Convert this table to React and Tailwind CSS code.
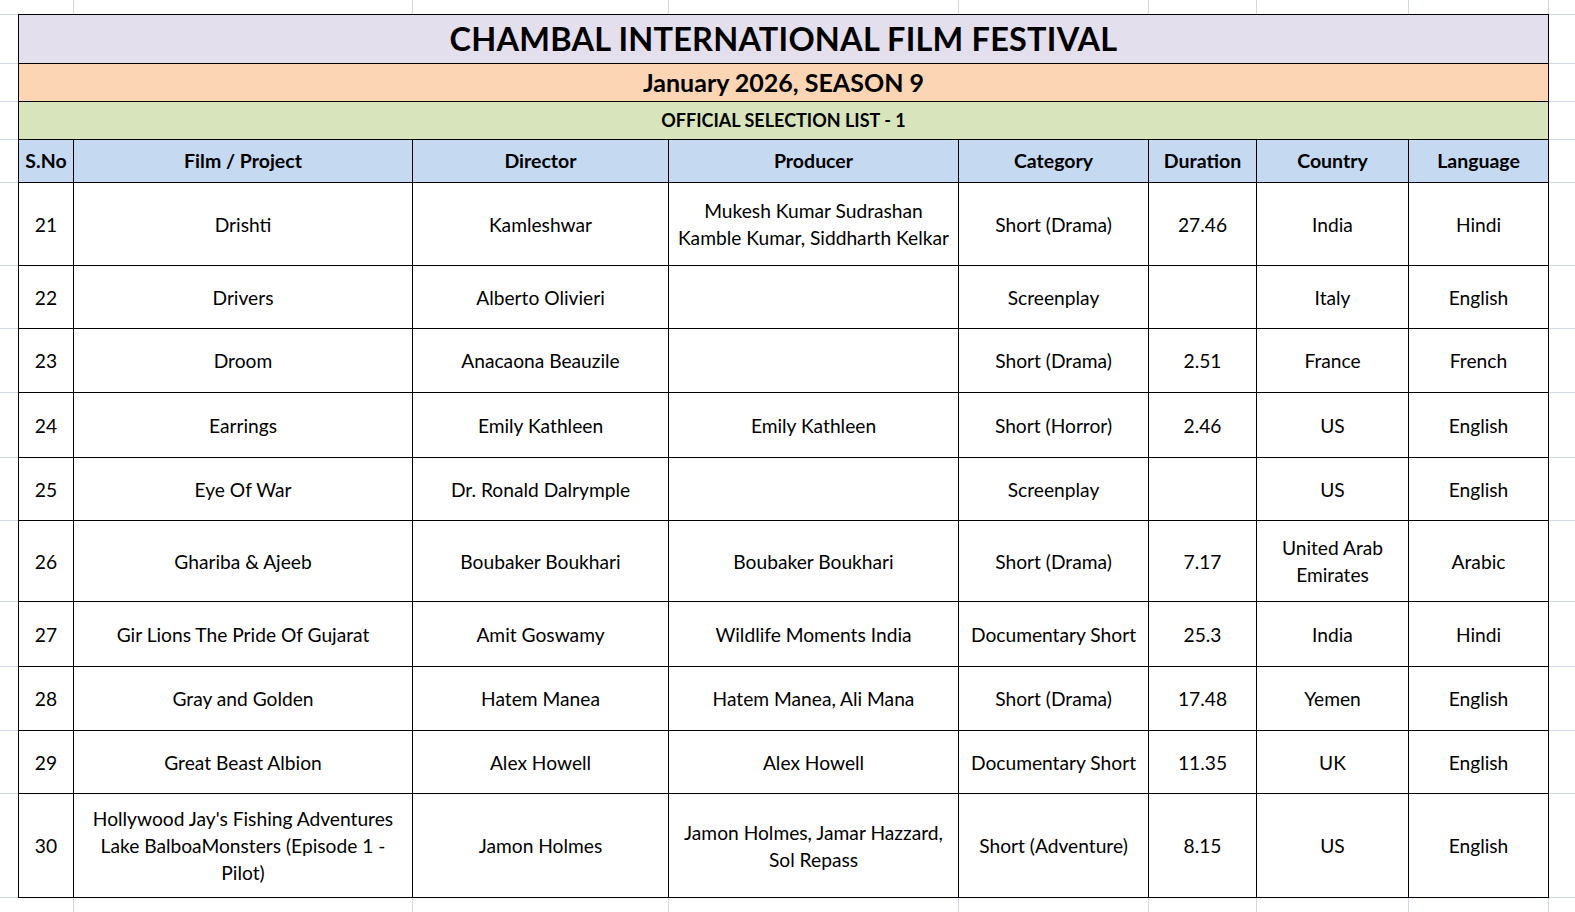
import React from "react";

const rows = [
  { h: "h-[83px]", c: ["21", ["Drishti"], ["Kamleshwar"], ["Mukesh Kumar Sudrashan", "Kamble Kumar, Siddharth Kelkar"], ["Short (Drama)"], ["27.46"], ["India"], ["Hindi"]] },
  { h: "h-[63px]", c: ["22", ["Drivers"], ["Alberto Olivieri"], [], ["Screenplay"], [], ["Italy"], ["English"]] },
  { h: "h-[64px]", c: ["23", ["Droom"], ["Anacaona Beauzile"], [], ["Short (Drama)"], ["2.51"], ["France"], ["French"]] },
  { h: "h-[65px]", c: ["24", ["Earrings"], ["Emily Kathleen"], ["Emily Kathleen"], ["Short (Horror)"], ["2.46"], ["US"], ["English"]] },
  { h: "h-[63px]", c: ["25", ["Eye Of War"], ["Dr. Ronald Dalrymple"], [], ["Screenplay"], [], ["US"], ["English"]] },
  { h: "h-[81px]", c: ["26", ["Ghariba & Ajeeb"], ["Boubaker Boukhari"], ["Boubaker Boukhari"], ["Short (Drama)"], ["7.17"], ["United Arab", "Emirates"], ["Arabic"]] },
  { h: "h-[65px]", c: ["27", ["Gir Lions The Pride Of Gujarat"], ["Amit Goswamy"], ["Wildlife Moments India"], ["Documentary Short"], ["25.3"], ["India"], ["Hindi"]] },
  { h: "h-[64px]", c: ["28", ["Gray and Golden"], ["Hatem Manea"], ["Hatem Manea, Ali Mana"], ["Short (Drama)"], ["17.48"], ["Yemen"], ["English"]] },
  { h: "h-[63px]", c: ["29", ["Great Beast Albion"], ["Alex Howell"], ["Alex Howell"], ["Documentary Short"], ["11.35"], ["UK"], ["English"]] },
  { h: "h-[104px]", c: ["30", ["Hollywood Jay's Fishing Adventures", "Lake BalboaMonsters (Episode 1 -", "Pilot)"], ["Jamon Holmes"], ["Jamon Holmes, Jamar Hazzard,", "Sol Repass"], ["Short (Adventure)"], ["8.15"], ["US"], ["English"]] },
];

const headers = ["S.No", "Film / Project", "Director", "Producer", "Category", "Duration", "Country", "Language"];

const marginHeights = [
  "h-[49px]", "h-[38px]", "h-[38px]", "h-[43px]",
  ...rows.map((r) => r.h),
];

function Margin({ className }) {
  return (
    <div className={"flex flex-col border-t border-[#d0d7e5] " + className}>
      {marginHeights.map((h, i) => (
        <div key={i} className={h + " shrink-0 border-b border-[#d0d7e5]"} />
      ))}
    </div>
  );
}

function Strip({ h }) {
  return (
    <div className={"flex " + h}>
      <div className="w-[19px] shrink-0" />
      <div className="w-[55px] shrink-0 border-r border-[#d0d7e5]" />
      <div className="w-[339px] shrink-0 border-r border-[#d0d7e5]" />
      <div className="w-[256px] shrink-0 border-r border-[#d0d7e5]" />
      <div className="w-[290px] shrink-0 border-r border-[#d0d7e5]" />
      <div className="w-[190px] shrink-0 border-r border-[#d0d7e5]" />
      <div className="w-[108px] shrink-0 border-r border-[#d0d7e5]" />
      <div className="w-[152px] shrink-0 border-r border-[#d0d7e5]" />
      <div className="w-[140px] shrink-0 border-r border-[#d0d7e5]" />
      <div className="flex-1" />
    </div>
  );
}

export default function App() {
  return (
    <div className="w-[1575px] h-[912px] overflow-hidden bg-white text-black font-['Lato','Open_Sans',sans-serif]">
      <Strip h="h-[14px]" />
      <div className="flex">
        <Margin className="w-[18px] shrink-0" />
        <div className="w-[1531px] shrink-0 border-l border-t border-black grid grid-cols-[55px_339px_256px_290px_190px_108px_152px_140px]">
          <div className="col-span-8 h-[49px] bg-[#e4dfec] border-r border-b border-black flex items-center justify-center font-bold text-[32.5px] tracking-[0.2px]">
            CHAMBAL INTERNATIONAL FILM FESTIVAL
          </div>
          <div className="col-span-8 h-[38px] bg-[#fcd5b4] border-r border-b border-black flex items-center justify-center font-bold text-[25px]">
            January 2026, SEASON 9
          </div>
          <div className="col-span-8 h-[38px] bg-[#d8e4bc] border-r border-b border-black flex items-center justify-center font-bold text-[18px]">
            OFFICIAL SELECTION LIST - 1
          </div>
          {headers.map((t) => (
            <div key={t} className="h-[43px] bg-[#c5d9f1] border-r border-b border-black flex items-center justify-center font-bold text-[19.5px]">
              {t}
            </div>
          ))}
          {rows.map((r) =>
            r.c.map((cell, j) => (
              <div
                key={r.c[0] + "-" + j}
                className={r.h + " border-r border-b border-black flex flex-col items-center justify-center text-center text-[19.2px] leading-[27px]"}
              >
                {Array.isArray(cell)
                  ? cell.map((line, k) => (
                      <span key={k} className="block whitespace-nowrap">
                        {line}
                      </span>
                    ))
                  : cell}
              </div>
            ))
          )}
        </div>
        <Margin className="flex-1" />
      </div>
      <Strip h="h-[18px]" />
    </div>
  );
}
